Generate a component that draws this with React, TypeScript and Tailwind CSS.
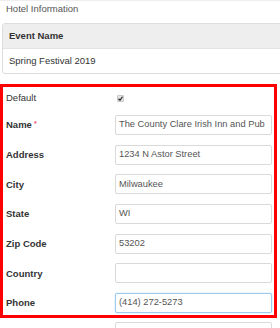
import React from "react";

type fieldType = { label: string; value: string; required?: boolean; focused?: boolean };

const fields: fieldType[] = [
  { label: "Name", value: "The County Clare Irish Inn and Pub", required: true },
  { label: "Address", value: "1234 N Astor Street" },
  { label: "City", value: "Milwaukee" },
  { label: "State", value: "WI" },
  { label: "Zip Code", value: "53202" },
  { label: "Country", value: "" },
  { label: "Phone", value: "(414) 272-5273", focused: true },
];

function FieldRow({ label, value, required, focused }: fieldType) {
  return (
    <div className="flex items-center h-[20px]">
      <div className="w-[112px] pl-[3px] font-bold text-[#333]">
        {label}
        {required && <span className="text-[#f0506e] text-[7px] align-top ml-[2px]">*</span>}
      </div>
      <div
        className={
          "w-[157px] h-[20px] flex items-center px-[3px] rounded-[2px] bg-white text-[#555] text-[9.3px] whitespace-nowrap overflow-hidden border " +
          (focused ? "border-[#9ecaed] shadow-[0_0_2px_#bcdcf5]" : "border-[#d9d9d9]")
        }
      >
        {value}
      </div>
    </div>
  );
}

export default function App() {
  return (
    <div
      className="w-[280px] h-[328px] overflow-hidden bg-white text-[9.5px] leading-none"
      style={{ fontFamily: '"Liberation Sans", Arial, sans-serif' }}
    >
      <div className="border-t border-[#eee] pl-[6px] pt-[3px] h-[23px] text-[#555]">Hotel Information</div>

      {/* event card */}
      <div className="ml-[2px] w-[300px] border border-[#ddd] rounded-[3px] overflow-hidden">
        <div className="h-[25px] bg-[#eeeeee] border-b border-[#e2e2e2] flex items-center pl-[6px] font-bold text-[#333]">
          Event Name
        </div>
        <div className="h-[24px] flex items-center pl-[6px] text-[#333]">Spring Festival 2019</div>
      </div>

      {/* hotel form */}
      <div className="mt-[10px] w-[277px] border-[3px] border-[#ff0000] pt-[5px] pb-[2px]">
        <div className="flex items-center h-[12px]">
          <div className="w-[114px] pl-[3px] text-[#333]">Default</div>
          <span className="w-[7px] h-[7px] bg-[#e4e4e4] border border-[#c8c8c8] rounded-[1px] flex items-center justify-center">
            <svg width="5" height="5" viewBox="0 0 10 10">
              <path d="M1 5.5 L4 8.5 L9 1.5" fill="none" stroke="#222" strokeWidth="2.4" />
            </svg>
          </span>
        </div>
        <div className="mt-[11px] flex flex-col gap-y-[9.67px]">
          {fields.map((f) => (
            <FieldRow key={f.label} {...f} />
          ))}
        </div>
      </div>

      <div className="mt-[4px] flex items-center h-[20px] ml-[3px]">
        <div className="w-[112px] pl-[3px] font-bold text-[#333]">Website</div>
        <div className="w-[157px] h-[20px] rounded-[2px] border border-[#d9d9d9]"></div>
      </div>
    </div>
  );
}
